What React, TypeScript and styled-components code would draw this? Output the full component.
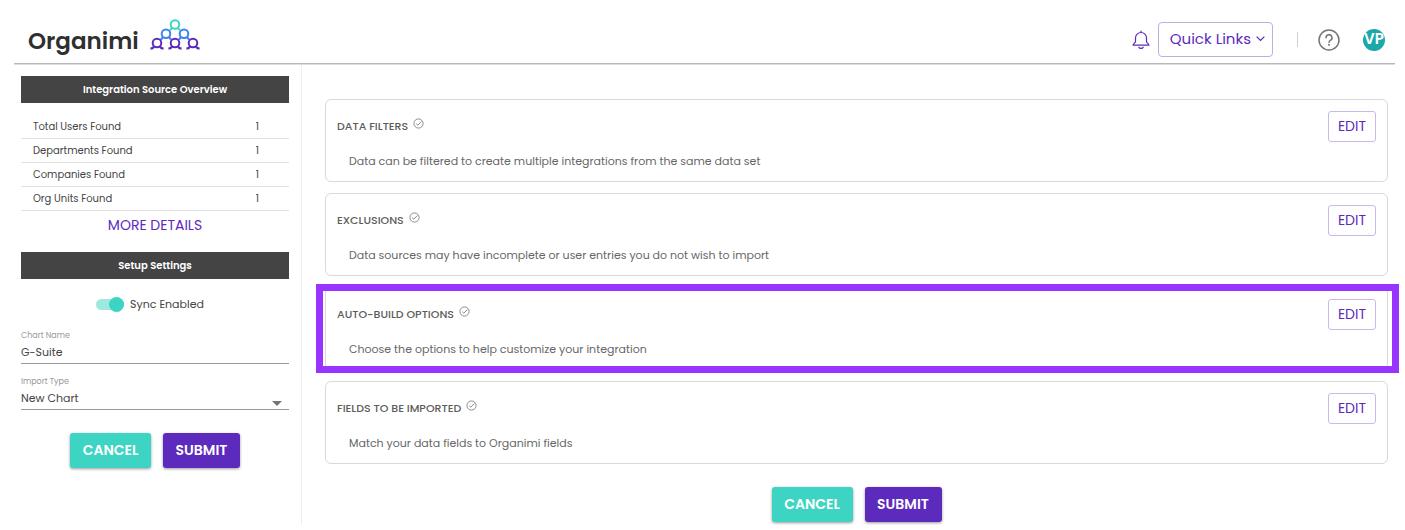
import React, { useState } from "react";
import styled, { createGlobalStyle } from "styled-components";

const purple = "#5c2bbd";
const blue = "#3b82f0";
const teal = "#3dd4c3";

const GlobalStyle = createGlobalStyle`
  *, *::before, *::after { box-sizing: border-box; }
  body {
    margin: 0;
    background: #fff;
    color: #444;
    font-family: Poppins, Inter, "Liberation Sans", sans-serif;
    font-size: 11px;
    line-height: 16px;
  }
  button, input, select { font: inherit; color: inherit; margin: 0; }
  button { cursor: pointer; }
`;

const Page = styled.div`
  display: flex;
  flex-direction: column;
`;

const Header = styled.header`
  display: flex;
  align-items: flex-end;
  justify-content: space-between;
  margin: 0 10px 1px 14px;
  padding: 18px 10px 6px 14px;
  border-bottom: 1px solid #b8b8b8;
  box-shadow: 0 1px 0 #dedede;
`;

const Brand = styled.a`
  display: flex;
  align-items: flex-start;
  gap: 10px;
  height: 39px;
  color: #2f2f2f;
  text-decoration: none;
`;

const BrandName = styled.span`
  padding-top: 6px;
  font-size: 23px;
  line-height: 34px;
  font-weight: 600;
`;

const Tools = styled.div`
  display: flex;
  align-items: center;
`;

const IconButton = styled.button`
  display: flex;
  padding: 0;
  border: 0;
  background: none;
`;

const QuickLinks = styled.button`
  display: flex;
  align-items: center;
  gap: 5px;
  height: 35px;
  margin-left: 8px;
  padding: 0 7px 1px 11px;
  border: 1px solid #bfaee6;
  border-radius: 4px;
  background: #fff;
  color: ${purple};
  font-size: 15px;
  font-weight: 400;
`;

const Separator = styled.span`
  width: 1px;
  height: 15px;
  margin: 0 20px 0 24px;
  background: #cfcfcf;
`;

const Avatar = styled.button`
  display: flex;
  align-items: center;
  justify-content: center;
  width: 22px;
  height: 22px;
  margin-left: 23px;
  padding: 0 0 2px;
  overflow: hidden;
  border: 0;
  border-radius: 50%;
  background: #1ba8a8;
  color: #fff;
  font-size: 15px;
  font-weight: 600;
`;

const Body = styled.div`
  display: grid;
  grid-template-columns: 302px minmax(0, 1fr);
`;

const Sidebar = styled.aside`
  padding: 11px 12px 57px 21px;
  border-right: 1px solid #efefef;
`;

const PanelTitle = styled.h2`
  margin: 0;
  background: #444;
  color: #fff;
  font-size: 10px;
  line-height: 27px;
  font-weight: 600;
  text-align: center;
`;

const Stats = styled.table`
  width: 100%;
  margin-top: 12px;
  border-collapse: separate;
  border-spacing: 0;
  font-size: 10px;
`;

const StatName = styled.th`
  height: 24px;
  padding: 0 0 0 12px;
  border-bottom: 1px solid #e2e2e2;
  font-weight: 400;
  text-align: left;
`;

const StatValue = styled.td`
  width: 64px;
  padding: 0 30px 0 0;
  border-bottom: 1px solid #e2e2e2;
  text-align: right;
`;

const MoreDetails = styled.button`
  display: block;
  margin: 4px auto 17px;
  padding: 0;
  border: 0;
  background: none;
  color: ${purple};
  font-size: 14px;
  line-height: 20px;
  font-weight: 400;
`;

const SwitchLabel = styled.label`
  display: flex;
  align-items: center;
  justify-content: center;
  gap: 6px;
  height: 16px;
  margin: 17px 10px 18px 0;
`;

const Switch = styled.input`
  appearance: none;
  display: flex;
  align-items: center;
  width: 28px;
  height: 11px;
  border-radius: 6px;
  background: #ccc;
  cursor: pointer;

  &::before {
    content: "";
    width: 15px;
    height: 15px;
    border-radius: 50%;
    background: #999;
  }
  &:checked { justify-content: flex-end; background: #9de9e0; }
  &:checked::before { background: ${teal}; }
`;

const Field = styled.div`
  display: grid;
  grid-template-columns: minmax(0, 1fr);
  margin-bottom: 12px;
`;

const FieldLabel = styled.label`
  color: #999;
  font-size: 8px;
  line-height: 12px;
`;

const TextInput = styled.input`
  width: 100%;
  height: 22px;
  padding: 0;
  border: 0;
  border-bottom: 1px solid #999;
  border-radius: 0;
  background: transparent;
`;

const SelectBox = styled.div`
  display: grid;
  align-items: center;

  > * { grid-area: 1 / 1; }
  > svg { justify-self: end; margin: 8px 7px 0 0; pointer-events: none; }
`;

const Select = styled.select`
  appearance: none;
  width: 100%;
  height: 22px;
  padding: 0 20px 1px 0;
  border: 0;
  border-bottom: 1px solid #999;
  border-radius: 0;
  background: transparent;
`;

const Actions = styled.div`
  display: flex;
  justify-content: center;
  gap: 12px;
  margin-top: 23px;
`;

const ActionButton = styled.button<{ $color: string; $wide?: boolean }>`
  height: 35px;
  width: ${(p) => (p.$wide ? 81 : 77)}px;
  padding: 0 0 2px;
  border: 0;
  border-radius: 3px;
  background: ${(p) => p.$color};
  box-shadow: 0 1px 3px rgba(0, 0, 0, 0.4);
  color: #fff;
  font-size: 14px;
  font-weight: 600;
`;

const Main = styled.main`
  padding: 34px 17px 0 23px;
`;

const Cards = styled.div`
  display: grid;
  gap: 11px;
`;

const Card = styled.section`
  position: relative;
  display: flex;
  align-items: flex-start;
  justify-content: space-between;
  height: 83px;
  padding: 11px;
  border: 1px solid #d9d9d9;
  border-radius: 6px;
  color: #666;
`;

const CardTitle = styled.h3`
  display: flex;
  align-items: flex-start;
  gap: 5px;
  margin: 7px 0 0;
  color: #5c5c5c;
  font-size: 11px;
  line-height: 16px;
  font-weight: 500;
`;

const CardText = styled.p`
  margin: 19px 0 0 12px;
`;

const EditButton = styled.button`
  width: 48px;
  height: 31px;
  padding: 0 0 2px;
  border: 1px solid #c9bbe9;
  border-radius: 3px;
  background: #fff;
  color: ${purple};
  font-size: 14px;
  font-weight: 400;
`;

const Highlight = styled.div`
  position: absolute;
  inset: -4px -12px -4px -10px;
  border: 7px solid #9933ff;
  pointer-events: none;
`;

const Person = ({ x, y, color, legs }: { x: number; y: number; color: string; legs?: boolean }) => (
  <g stroke={color} strokeWidth="2" fill="none">
    <circle cx={x} cy={y} r="4.3" />
    {legs && (
      <path d={`M${x - 3} ${y + 3}Q${x - 3.4} ${y + 5.4} ${x - 6.6} ${y + 5.6}M${x + 3} ${y + 3}Q${x + 3.4} ${y + 5.4} ${x + 6.6} ${y + 5.6}`} />
    )}
  </g>
);

const LogoMark = () => (
  <svg width="53" height="33" viewBox="0 0 53 33" aria-hidden="true">
    <path d="M23 9.600Q22.600 11.400 20.800 12M29 9.600Q29.400 11.400 31.200 12" stroke={teal} strokeWidth="2" fill="none" />
    <path
      d="M14 18.900Q13.400 20.700 11.600 21.300M20 18.900Q20.600 20.700 22.400 21.300M32 18.900Q31.400 20.700 29.600 21.300M38 18.900Q38.600 20.700 40.400 21.300"
      stroke={blue}
      strokeWidth="2"
      fill="none"
    />
    <Person x={26} y={6.5} color={teal} />
    <Person x={17} y={15.7} color={blue} />
    <Person x={35} y={15.7} color={blue} />
    <Person x={8} y={25} color={purple} legs />
    <Person x={26} y={25} color={purple} legs />
    <Person x={44} y={25} color={purple} legs />
  </svg>
);

const BellIcon = () => (
  <svg width="18" height="20" viewBox="0 0 18 20" fill="none" stroke={purple} strokeWidth="1.2" strokeLinecap="round" strokeLinejoin="round">
    <path d="M9 1v1.300M3.500 11.500V8a5.500 5.500 0 0 1 11 0v3.500c0 1.300 2.400 2 2.400 3.700H1.100c0-1.700 2.400-2.400 2.400-3.700zM6.800 17.200c.6 1.600 3.800 1.600 4.400 0" />
  </svg>
);

const HelpIcon = () => (
  <svg width="22" height="22" viewBox="0 0 22 22" fill="none" stroke="#757575" strokeWidth="1.5" strokeLinecap="round">
    <circle cx="11" cy="11" r="10" />
    <path d="M8 8.700a3 3 0 1 1 4.400 2.600c-1 .55-1.400 1-1.400 2" />
    <circle cx="11" cy="15.800" r=".35" fill="#757575" />
  </svg>
);

const CheckIcon = () => (
  <svg width="11" height="11" viewBox="0 0 11 11" fill="none" stroke="#808080" strokeWidth=".9">
    <circle cx="5.500" cy="5.500" r="4.600" />
    <path d="M3.200 5.700l1.600 1.500L8.400 3.500" />
  </svg>
);

const sources = [
  ["Total Users Found", 1],
  ["Departments Found", 1],
  ["Companies Found", 1],
  ["Org Units Found", 1],
];

const sections = [
  { title: "DATA FILTERS", text: "Data can be filtered to create multiple integrations from the same data set" },
  { title: "EXCLUSIONS", text: "Data sources may have incomplete or user entries you do not wish to import" },
  { title: "AUTO-BUILD OPTIONS", text: "Choose the options to help customize your integration", active: true },
  { title: "FIELDS TO BE IMPORTED", text: "Match your data fields to Organimi fields" },
];

const FormActions = () => (
  <Actions>
    <ActionButton type="button" $color={teal} $wide>CANCEL</ActionButton>
    <ActionButton type="submit" $color={purple}>SUBMIT</ActionButton>
  </Actions>
);

export default function App() {
  const [sync, setSync] = useState(true);
  const [name, setName] = useState("G-Suite");

  return (
    <Page>
      <GlobalStyle />
      <Header>
        <Brand href="#">
          <BrandName>Organimi</BrandName>
          <LogoMark />
        </Brand>
        <Tools>
          <IconButton type="button" aria-label="Notifications"><BellIcon /></IconButton>
          <QuickLinks type="button">
            Quick Links
            <svg width="9" height="6" viewBox="0 0 9 6" fill="none" stroke={purple} strokeWidth="1.1" strokeLinecap="round">
              <path d="M1 1l3.500 3.500L8 1" />
            </svg>
          </QuickLinks>
          <Separator />
          <IconButton type="button" aria-label="Help"><HelpIcon /></IconButton>
          <Avatar type="button">VP</Avatar>
        </Tools>
      </Header>
      <Body>
        <Sidebar>
          <PanelTitle>Integration Source Overview</PanelTitle>
          <Stats>
            <tbody>
              {sources.map(([label, count]) => (
                <tr key={label}>
                  <StatName scope="row">{label}</StatName>
                  <StatValue>{count}</StatValue>
                </tr>
              ))}
            </tbody>
          </Stats>
          <MoreDetails type="button">MORE DETAILS</MoreDetails>
          <PanelTitle>Setup Settings</PanelTitle>
          <form onSubmit={(e) => e.preventDefault()}>
            <SwitchLabel>
              <Switch type="checkbox" role="switch" checked={sync} onChange={(e) => setSync(e.target.checked)} />
              Sync Enabled
            </SwitchLabel>
            <Field>
              <FieldLabel htmlFor="chart-name">Chart Name</FieldLabel>
              <TextInput id="chart-name" value={name} onChange={(e) => setName(e.target.value)} />
            </Field>
            <Field>
              <FieldLabel htmlFor="import-type">Import Type</FieldLabel>
              <SelectBox>
                <Select id="import-type"><option>New Chart</option></Select>
                <svg width="10" height="5" viewBox="0 0 10 5" fill="#757575"><path d="M0 0h10L5 5z" /></svg>
              </SelectBox>
            </Field>
            <FormActions />
          </form>
        </Sidebar>
        <Main>
          <Cards>
            {sections.map((s) => (
              <Card key={s.title}>
                <div>
                  <CardTitle>{s.title}<CheckIcon /></CardTitle>
                  <CardText>{s.text}</CardText>
                </div>
                <EditButton type="button">EDIT</EditButton>
                {s.active && <Highlight />}
              </Card>
            ))}
          </Cards>
          <FormActions />
        </Main>
      </Body>
    </Page>
  );
}
